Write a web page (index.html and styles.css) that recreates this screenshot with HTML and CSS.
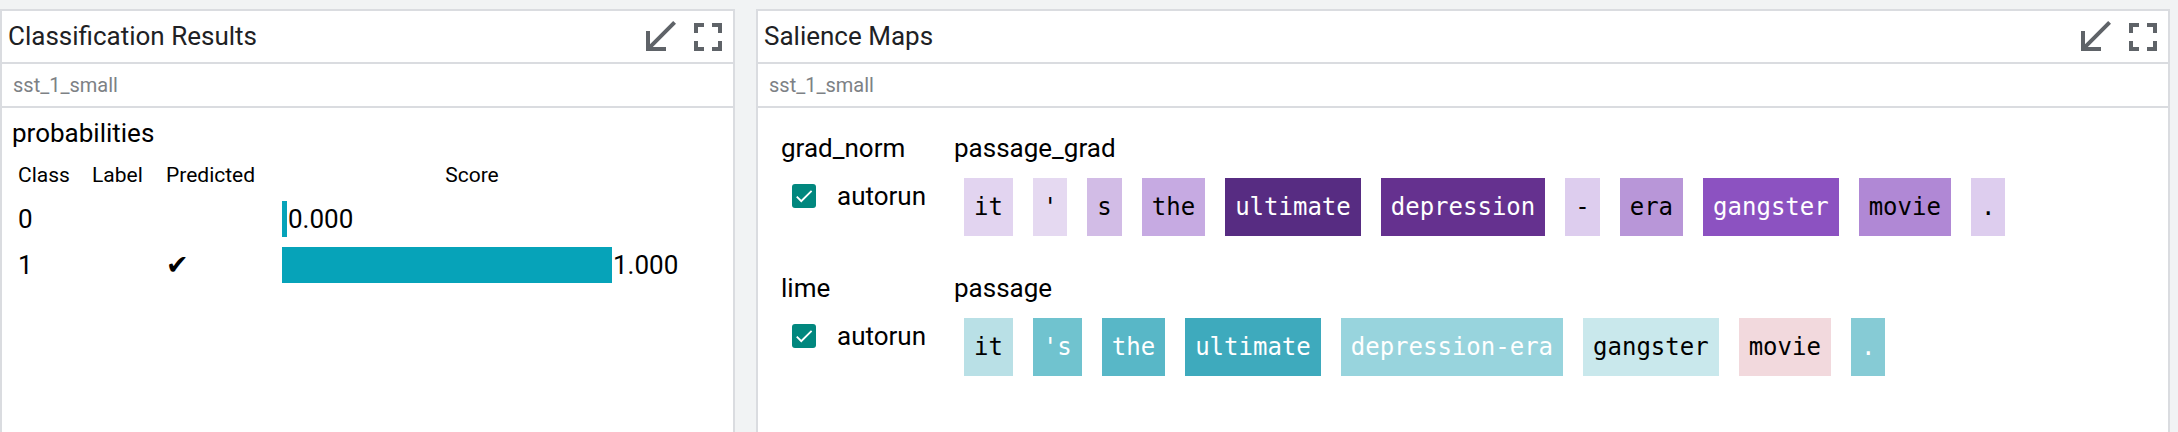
FILE: index.html
```html
<!DOCTYPE html>
<html>
<head>
<meta charset="utf-8">
<link rel="stylesheet" href="styles.css">
</head>
<body>
<div class="page">
  <section class="panel panel-left">
    <div class="panel-head">
      <div class="panel-title">Classification Results</div>
      <div class="panel-icons">
        <svg class="icon" viewBox="0 0 24 24"><path d="M20 5.41L18.59 4 7 15.59V9H5v10h10v-2H8.41z"/></svg>
        <svg class="icon" viewBox="0 0 24 24"><path d="M7 14H5v5h5v-2H7v-3zm-2-4h2V7h3V5H5v5zm12 7h-3v2h5v-5h-2v3zM14 5v2h3v3h2V5h-5z"/></svg>
      </div>
    </div>
    <div class="panel-sub">sst_1_small</div>
    <div class="panel-body cls-body">
      <div class="cls-title">probabilities</div>
      <div class="cls-table">
        <div class="cls-row cls-head">
          <div class="c-class">Class</div>
          <div class="c-label">Label</div>
          <div class="c-pred">Predicted</div>
          <div class="score-head">Score</div>
        </div>
        <div class="cls-row">
          <div class="c-class">0</div>
          <div class="c-label"></div>
          <div class="c-pred"></div>
          <div class="c-score"><span class="bar" style="width:5px"></span><span class="val">0.000</span></div>
        </div>
        <div class="cls-row">
          <div class="c-class">1</div>
          <div class="c-label"></div>
          <div class="c-pred"><span class="check">✔</span></div>
          <div class="c-score"><span class="bar" style="width:330px"></span><span class="val">1.000</span></div>
        </div>
      </div>
    </div>
  </section>

  <section class="panel panel-right">
    <div class="panel-head">
      <div class="panel-title">Salience Maps</div>
      <div class="panel-icons">
        <svg class="icon" viewBox="0 0 24 24"><path d="M20 5.41L18.59 4 7 15.59V9H5v10h10v-2H8.41z"/></svg>
        <svg class="icon" viewBox="0 0 24 24"><path d="M7 14H5v5h5v-2H7v-3zm-2-4h2V7h3V5H5v5zm12 7h-3v2h5v-5h-2v3zM14 5v2h3v3h2V5h-5z"/></svg>
      </div>
    </div>
    <div class="panel-sub">sst_1_small</div>
    <div class="panel-body sal-body">
      <div class="sal-group">
        <div class="sal-method">grad_norm</div>
        <div class="sal-field">passage_grad</div>
        <div class="sal-control">
          <span class="checkbox"><svg viewBox="0 0 24 24"><path d="M9 16.2L4.8 12l-1.4 1.4L9 19 21 7l-1.4-1.4L9 16.2z"/></svg></span>
          <span class="autorun">autorun</span>
        </div>
        <div class="tokens">
          <span class="tok" style="background:#e2d4f0">it</span>
          <span class="tok" style="background:#e5d9f1">'</span>
          <span class="tok" style="background:#d2bce6">s</span>
          <span class="tok" style="background:#c6aae2">the</span>
          <span class="tok light-text" style="background:#572c82">ultimate</span>
          <span class="tok light-text" style="background:#65318f">depression</span>
          <span class="tok" style="background:#ddcdee">-</span>
          <span class="tok" style="background:#b896d8">era</span>
          <span class="tok light-text" style="background:#8c52c1">gangster</span>
          <span class="tok" style="background:#b088d5">movie</span>
          <span class="tok" style="background:#ddcdee">.</span>
        </div>
      </div>
      <div class="sal-group">
        <div class="sal-method">lime</div>
        <div class="sal-field">passage</div>
        <div class="sal-control">
          <span class="checkbox"><svg viewBox="0 0 24 24"><path d="M9 16.2L4.8 12l-1.4 1.4L9 19 21 7l-1.4-1.4L9 16.2z"/></svg></span>
          <span class="autorun">autorun</span>
        </div>
        <div class="tokens">
          <span class="tok" style="background:#b9e0e6">it</span>
          <span class="tok light-text" style="background:#70c3cf">'s</span>
          <span class="tok light-text" style="background:#58b7c7">the</span>
          <span class="tok light-text" style="background:#3eaabd">ultimate</span>
          <span class="tok light-text" style="background:#98d4dd">depression-era</span>
          <span class="tok" style="background:#c9e8ec">gangster</span>
          <span class="tok" style="background:#f2d9dd">movie</span>
          <span class="tok light-text" style="background:#86cbd5">.</span>
        </div>
      </div>
    </div>
  </section>
</div>
</body>
</html>
```

FILE: styles.css
```css
html, body {
  margin: 0;
  padding: 0;
  background: #f1f3f4;
  font-family: Roboto, "Liberation Sans", sans-serif;
  color: #000;
}

.page {
  display: flex;
  gap: 21px;
  height: 432px;
  box-sizing: border-box;
  padding: 9px 8px 0 0;
  overflow: hidden;
}

.panel {
  background: #fff;
  border: 2px solid #dadce0;
  border-bottom: none;
  box-sizing: border-box;
  display: flex;
  flex-direction: column;
}

.panel-left {
  width: 735px;
  flex: none;
}

.panel-right {
  flex: 1;
}

.panel-head {
  height: 51px;
  display: flex;
  align-items: center;
  justify-content: space-between;
  padding: 0 1px 0 6px;
  border-bottom: 2px solid #dadce0;
  flex: none;
}

.panel-title {
  font-size: 26px;
  line-height: 30px;
  color: #202124;
  margin-top: -2px;
}

.panel-icons {
  display: flex;
}

.icon {
  width: 48px;
  height: 48px;
  fill: #5f6368;
  display: block;
}

.panel-sub {
  height: 42px;
  display: flex;
  align-items: center;
  padding-left: 11px;
  font-size: 20px;
  color: #7d8185;
  border-bottom: 2px solid #dadce0;
  flex: none;
}

.panel-body {
  flex: 1;
}

/* classification */
.cls-body {
  padding: 10px 0 0 10px;
}

.cls-title {
  font-size: 26px;
  line-height: 30px;
}

.cls-table {
  margin-top: 13px;
  padding-left: 6px;
}

.cls-row {
  display: grid;
  grid-template-columns: 74px 74px 116px 380px;
  height: 46px;
  align-items: center;
  font-size: 26px;
  line-height: 30px;
}

.cls-row.cls-head {
  height: 35px;
  align-items: start;
  font-size: 21px;
  line-height: 28px;
}

.score-head {
  text-align: center;
}

.c-score {
  display: flex;
  align-items: center;
}

.bar {
  display: block;
  height: 36px;
  background: #06a3b9;
  flex: none;
}

.val {
  padding-left: 1px;
}

.check {
  font-family: "DejaVu Sans", sans-serif;
  font-size: 27px;
}

/* salience */
.sal-body {
  padding: 25px 0 0 23px;
}

.sal-group {
  display: grid;
  grid-template-columns: 173px 1fr;
  grid-template-rows: 30px 58px;
  row-gap: 15px;
  margin-bottom: 37px;
}

.sal-method,
.sal-field {
  font-size: 26px;
  line-height: 30px;
}

.sal-control {
  display: flex;
  align-items: center;
  align-self: start;
  height: 30px;
  margin-top: 3px;
  padding-left: 11px;
  gap: 21px;
}

.checkbox {
  width: 24px;
  height: 24px;
  border-radius: 3px;
  background: #01877e;
  display: flex;
  align-items: center;
  justify-content: center;
}

.checkbox svg {
  width: 22px;
  height: 22px;
  fill: #fff;
}

.autorun {
  font-size: 26px;
  line-height: 30px;
}

.tokens {
  display: flex;
  gap: 20px;
  padding-left: 10px;
}

.tok {
  height: 58px;
  padding: 0 10px;
  display: flex;
  align-items: center;
  font-family: "DejaVu Sans Mono", "Liberation Mono", monospace;
  font-size: 24px;
  color: #000;
  white-space: pre;
}

.tok.light-text {
  color: #fff;
}
```
